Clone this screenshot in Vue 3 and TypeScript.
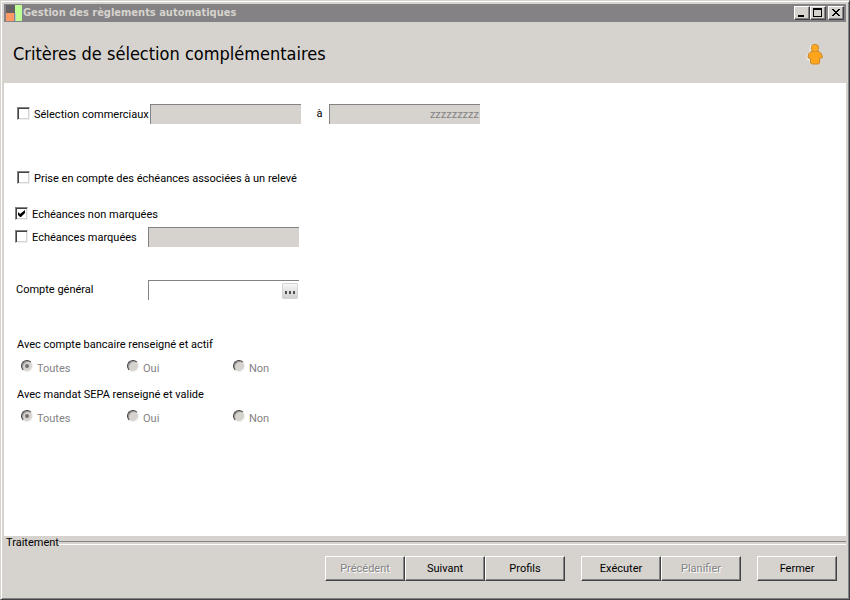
<script setup lang="ts">
import { reactive } from 'vue'

interface RadioGroup {
  id: string
  title: string
  value: string
}

interface Action {
  label: string
  disabled?: boolean
}

const form = reactive({
  salesEnabled: false,
  salesFrom: '',
  salesTo: 'zzzzzzzzz',
  includeStatement: false,
  unmarked: true,
  marked: false,
  marker: '',
  account: '',
})

const choices: string[] = ['Toutes', 'Oui', 'Non']

const groups = reactive<RadioGroup[]>([
  { id: 'bank', title: 'Avec compte bancaire renseigné et actif', value: 'Toutes' },
  { id: 'sepa', title: 'Avec mandat SEPA renseigné et valide', value: 'Toutes' },
])

const actionSets: Action[][] = [
  [{ label: 'Précédent', disabled: true }, { label: 'Suivant' }, { label: 'Profils' }],
  [{ label: 'Exécuter' }, { label: 'Planifier', disabled: true }],
  [{ label: 'Fermer' }],
]
</script>

<template>
  <div class="window">
    <header class="titlebar">
      <svg class="logo" width="16" height="17" viewBox="0 0 16 17" shape-rendering="crispEdges" aria-hidden="true">
        <rect width="9" height="8" fill="#636163" />
        <rect y="8" width="8" height="8" fill="#ff9a63" />
        <rect x="9" width="7" height="16" fill="#bdff94" />
        <path d="M9 8v5l1 3" stroke="#a5cfd6" fill="none" />
      </svg>
      <span class="caption">Gestion des règlements automatiques</span>
      <div class="controls">
        <button type="button" class="control" aria-label="Réduire">
          <svg width="12" height="10" viewBox="0 0 12 10" shape-rendering="crispEdges"><path d="M2 7h6v2H2z" /></svg>
        </button>
        <button type="button" class="control" aria-label="Agrandir">
          <svg width="12" height="10" viewBox="0 0 12 10" shape-rendering="crispEdges">
            <path fill-rule="evenodd" d="M1 0h9v9H1zM2 2v6h7V2z" />
          </svg>
        </button>
        <button type="button" class="control close" aria-label="Fermer la fenêtre">
          <svg width="12" height="10" viewBox="0 0 12 10" shape-rendering="crispEdges">
            <path d="M2 1h2v1h1v1h2v-1h1v-1h2v1h-1v1h-1v1h-1v1h1v1h1v1h1v1h-2v-1h-1v-1h-2v1h-1v1h-2v-1h1v-1h1v-1h1v-1h-1v-1h-1v-1h-1z" />
          </svg>
        </button>
      </div>
    </header>

    <div class="banner">
      <h1>Critères de sélection complémentaires</h1>
      <svg class="person" width="18" height="22" viewBox="0 0 18 22" aria-hidden="true">
        <path d="M5 2L4 6L4 9L1 12v4l3 1v3" fill="none" stroke="#f4efe6" />
        <path d="M5 8.500H13L15.500 11L16.500 14.500L13.500 15.500V20L12.500 21H6L4.500 20V15.500L2 14.500L2.500 11Z" fill="#ffa51c" stroke="#c9872c" />
        <circle cx="9" cy="5" r="3.700" fill="#ffa821" stroke="#d0902f" />
        <path d="M6.500 8.500h5" stroke="#e0921c" />
      </svg>
    </div>

    <main class="content">
      <div class="row sales">
        <label class="check"><input v-model="form.salesEnabled" type="checkbox" />Sélection commerciaux</label>
        <input v-model="form.salesFrom" class="field" type="text" disabled aria-label="Commercial de début" />
        <label class="to" for="sales-to">à</label>
        <input id="sales-to" v-model="form.salesTo" class="field end" type="text" disabled />
      </div>

      <div class="row statement">
        <label class="check">
          <input v-model="form.includeStatement" type="checkbox" />Prise en compte des échéances associées à un relevé
        </label>
      </div>

      <div class="criteria">
        <div class="row">
          <label class="check"><input v-model="form.unmarked" type="checkbox" />Echéances non marquées</label>
        </div>
        <div class="row">
          <label class="check name"><input v-model="form.marked" type="checkbox" />Echéances marquées</label>
          <input v-model="form.marker" class="field" type="text" disabled aria-label="Marque" />
        </div>
      </div>

      <div class="row account">
        <label class="name" for="account">Compte général</label>
        <div class="field lookup">
          <input id="account" v-model="form.account" type="text" />
          <button type="button" class="browse" aria-label="Rechercher un compte">
            <svg width="11" height="3" viewBox="0 0 11 3" shape-rendering="crispEdges"><path d="M1 0h2v3H1zM5 0h2v3H5zM9 0h2v3H9z" fill="#525052" /></svg>
          </button>
        </div>
      </div>

      <div class="groups">
        <fieldset v-for="g in groups" :key="g.id" class="group" disabled>
          <legend>{{ g.title }}</legend>
          <div class="options">
            <label v-for="c in choices" :key="c" class="radio">
              <input v-model="g.value" type="radio" :name="g.id" :value="c" /><span>{{ c }}</span>
            </label>
          </div>
        </fieldset>
      </div>
    </main>

    <footer class="footer">
      <div class="divider"><span>Traitement</span></div>
      <div class="actions">
        <div v-for="(set, i) in actionSets" :key="i" class="set">
          <button v-for="a in set" :key="a.label" type="button" class="action" :disabled="a.disabled">{{ a.label }}</button>
        </div>
      </div>
    </footer>
  </div>
</template>

<style>
body {
  margin: 0;
}
</style>

<style scoped>
* {
  box-sizing: border-box;
}

.window {
  display: flex;
  flex-direction: column;
  min-height: 100vh;
  padding: 2px;
  border: 1px solid;
  border-color: #d6d3ce #424142 #424142 #d6d3ce;
  box-shadow: inset 1px 1px #fff, inset -1px -1px #848284;
  background: #d6d3ce;
  color: #000;
  font: 11px/16px Roboto, Tahoma, sans-serif;
}

.titlebar {
  display: flex;
  align-items: center;
  height: 18px;
  margin: 1px 1px 0;
  padding-right: 2px;
  background: #848284;
}

.logo {
  display: block;
  margin: 1px 1px 0 2px;
}

.caption {
  flex: 1;
  color: #d6d3ce;
  font: bold 11px/20px "DejaVu Sans Condensed", Tahoma, sans-serif;
}

.controls {
  display: flex;
}

.control {
  display: flex;
  width: 16px;
  height: 14px;
  padding: 1px;
  border: 1px solid;
  border-color: #fff #424142 #424142 #fff;
  box-shadow: inset -1px -1px #848284;
  background: #d6d3ce;
}

.control svg {
  flex: none;
}

.close {
  margin-left: 2px;
}

.banner {
  display: flex;
  align-items: center;
  justify-content: space-between;
  height: 61px;
  padding: 2px 23px 0 10px;
}

h1 {
  margin: 0;
  font: 18px/24px "DejaVu Sans Condensed", Tahoma, sans-serif;
}

.content {
  flex: 1;
  display: flex;
  flex-direction: column;
  margin: 0 1px;
  padding: 21px 12px;
  background: #fff;
}

.row {
  display: flex;
  align-items: center;
  min-height: 20px;
}

.check {
  display: flex;
  gap: 4px;
  height: 20px;
  line-height: 22px;
}

.sales,
.statement {
  padding-left: 1px;
}

.sales .check {
  width: 133px;
}

.statement {
  margin-top: 44px;
}

.criteria {
  display: grid;
  gap: 3px;
  margin-top: 16px;
}

.criteria .check {
  margin-left: -1px;
}

.criteria .name {
  width: 133px;
}

.account {
  margin-top: 33px;
}

.account .name {
  width: 132px;
  line-height: 20px;
}

.to {
  width: 28px;
  padding-left: 9px;
  line-height: 20px;
  text-align: center;
}

.field {
  width: 151px;
  height: 20px;
  padding: 0 1px;
  border: solid #848284;
  border-width: 1px 0 0 1px;
  border-radius: 0;
  background: #fff;
  font: inherit;
}

.field:disabled {
  background: #d6d3ce;
  color: #848284;
}

.end {
  text-align: right;
}

.lookup {
  display: flex;
  align-items: center;
}

.lookup input {
  flex: 1;
  min-width: 0;
  padding: 0;
  border: 0;
  outline: 0;
  background: none;
  font: inherit;
}

.browse {
  display: flex;
  align-items: flex-end;
  justify-content: center;
  width: 16px;
  height: 16px;
  padding: 0 1px 4px 0;
  border: 1px solid #d6d3d6;
  border-radius: 1px;
  background: linear-gradient(#f7f7f7, #d0d0d0);
}

input[type='checkbox'] {
  appearance: none;
  display: grid;
  flex: none;
  width: 13px;
  height: 13px;
  margin: 3px 0 0;
  border: 1px solid;
  border-color: #848284 #efefef #efefef #848284;
  box-shadow: inset 1px 1px #424142, inset -1px -1px #d6d3ce;
  background: #fff;
}

input[type='checkbox']:checked::before {
  content: '';
  width: 7px;
  height: 7px;
  place-self: center;
  background: #000;
  clip-path: polygon(0 29%, 29% 57%, 100% 0, 100% 43%, 43% 100%, 29% 100%, 0 72%);
}

.groups {
  display: grid;
  gap: 10px;
  margin-top: 37px;
}

.group {
  min-width: 0;
  margin: 0;
  padding: 0 0 0 1px;
  border: 0;
}

legend {
  padding: 0;
}

.options {
  display: flex;
  margin-top: 6px;
  padding-left: 4px;
  color: #848284;
}

.radio {
  display: flex;
  gap: 4px;
  width: 106px;
  height: 18px;
}

.radio span {
  padding-top: 2px;
}

input[type='radio'] {
  appearance: none;
  display: grid;
  width: 12px;
  height: 12px;
  margin: 1px 0 0;
  border: 1px solid;
  border-color: #424142 #efefef #efefef #424142;
  border-radius: 50%;
  box-shadow: inset 1px 1px #9a989a;
  background: #d6d3ce;
}

input[type='radio']:checked::before {
  content: '';
  width: 4px;
  height: 4px;
  place-self: center;
  border-radius: 50%;
  background: #737173;
}

.footer {
  padding: 0 1px 16px;
}

.divider {
  display: flex;
  align-items: center;
  height: 14px;
  padding-left: 2px;
}

.divider::after {
  content: '';
  flex: 1;
  height: 2px;
  border-top: 1px solid #848284;
  border-bottom: 1px solid #fff;
}

.actions {
  display: flex;
  justify-content: flex-end;
  gap: 16px;
  margin-top: 6px;
  padding-right: 9px;
}

.set {
  display: flex;
}

.action {
  width: 80px;
  height: 25px;
  padding: 0;
  border: 1px solid;
  border-color: #fff #424142 #424142 #fff;
  box-shadow: inset -1px -1px #848284;
  background: #d6d3ce;
  color: #000;
  font: inherit;
}

.action:disabled {
  color: #848284;
  text-shadow: 1px 1px #fff;
}
</style>
